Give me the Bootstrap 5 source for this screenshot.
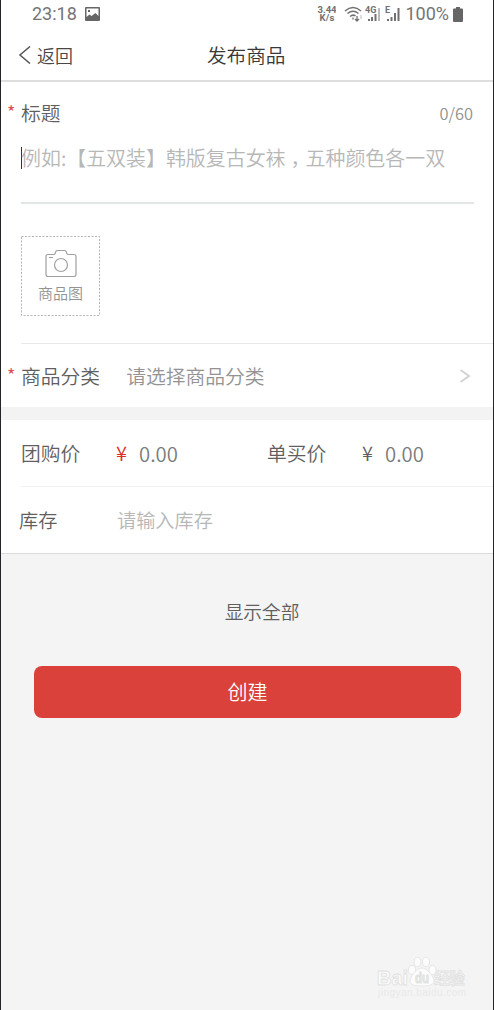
<!DOCTYPE html>
<html lang="zh-CN">
<head>
<meta charset="utf-8">
<meta name="viewport" content="width=device-width, initial-scale=1">
<title>发布商品</title>
<link href="https://cdn.jsdelivr.net/npm/bootstrap@5.3.0/dist/css/bootstrap.min.css" rel="stylesheet">
<style>
body{font-family:"Noto Sans CJK SC",sans-serif;font-size:19.8px;font-weight:350;line-height:30px;color:#5f5f5f;background:#f4f4f4;overflow:hidden}
.phone{height:1010px;border:solid #242428;border-width:0 1px}
.status{height:28px;font-family:Roboto,sans-serif;font-size:18px;font-weight:400;color:#757575;padding:0 30px 0 31px}
.speed{font-size:10px;line-height:8px;font-weight:700;width:20px}
.speed svg{display:block}
.topbar{height:54px;border-bottom:2px solid #dedede;color:#444;padding-top:1px}
.topbar a{font-size:18px;color:#484848;width:206px;padding-left:17px}
.topbar h1{font-size:19.6px;font-weight:350;color:#383838}
.inset{margin-left:20px}
.star{width:20px;padding-left:6px;color:#d9534f;font-size:18px;font-weight:400;line-height:27px}
.star-box{height:30px}
.count{font-size:16.4px;line-height:30px;color:#939393}
.title-field{height:76px;margin:0 19px 0 20px;border-bottom:2px solid #e2e6e5}
.hint{color:#b7b7b7;font-size:19.95px;line-height:28px;white-space:nowrap}
.comma{display:inline-block;padding:0 5px;font-feature-settings:"halt"}
.caret{width:1px;height:22px;background:#333;margin-right:-1px}
.photo{width:79px;height:80px;margin:32px 0 27px 20px;color:#939393;font-size:15px;line-height:22px}
.photo-icon{margin-top:13px}
.line{height:1px;background:#e8e8e8}
.line.faint{background:#f1f1f1}
.category{height:63px}
.category .pick{color:#939393;margin-left:26px}
.category .go{margin-right:23px}
.gap-band{height:13px;background:#f3f3f3}
.price{height:66px}
.price .label{width:95px}
.price .amount{color:#7b7b7b;margin-left:9px;font-size:20.3px}
.single{padding-left:10px}
.yen{width:14px;font-size:20px}
.red{color:#d9302c}
.stock{height:67px;border-bottom:1px solid #dcdcdc;font-size:19.2px}
.stock .label{width:98px;margin-left:18px}
.stock .hint{font-size:19.2px}
.more{margin-top:42px;padding-left:30px;font-size:18.7px}
.create{height:52px;margin:40px 32px 0 33px;background:#da413a;color:#fff;border:0;border-radius:8px;font-size:20px;font-weight:350;line-height:30px}
.watermark{margin:0 25px 10px auto;width:92px}
</style>
</head>
<body>
<div class="phone d-flex flex-column">
  <header class="bg-white flex-shrink-0">
  <div class="status d-flex align-items-center">
    <span>23:18</span>
    <svg class="ms-2" width="15" height="14" viewBox="0 0 15 14"><path fill="#666" fill-rule="evenodd" d="M1 0h13a1 1 0 0 1 1 1v12a1 1 0 0 1-1 1H1a1 1 0 0 1-1-1V1a1 1 0 0 1 1-1zm.5 1.500v8.500l3-2.500 2 1.500L10.500 6 13.500 9V1.500zM3 3h2v2H3z"/></svg>
    <div class="speed ms-auto"><svg width="20" height="18" viewBox="0 0 20 18" fill="#707070" text-anchor="middle"><text x="11" y="8" font-size="9.500" textLength="19">3.44</text><text x="11" y="16" font-size="9.500" textLength="15">K/s</text></svg></div>
    <svg class="ms-2" width="57" height="18" viewBox="0 0 57 18" fill="none" stroke="#707070" stroke-width="1.500">
      <path d="M1 6Q9-1 17 6M3.500 8.500Q9 4 14.500 8.500M6 11.500q3-2.500 5.500-.5"/><path d="M9 12.500v2M13 11v5m-2-2 2 2 2-2" stroke-width="1.300"/><path d="M17 14v-4" stroke="#bbb" stroke-width="1"/>
      <text x="21" y="8" font-size="9" font-weight="700" fill="#707070" stroke="none">4G</text>
      <path d="M25 14v2M28 12v4M31.500 9v7" stroke-width="2"/><path d="M35 3v13" stroke="#bbb" stroke-width="2"/>
      <text x="41" y="8" font-size="9" font-weight="700" fill="#707070" stroke="none">E</text>
      <path d="M44 14v2M47.500 12v4M51 8v8M54.500 3v13" stroke-width="2"/>
    </svg>
    <span class="ms-1">100%</span>
    <svg class="ms-1" width="10" height="15" viewBox="0 0 10 15"><path fill="#666" d="M3 0h4v1.500h2q1 0 1 1V14q0 1-1 1H1q-1 0-1-1V2.500q0-1 1-1h2z"/></svg>
  </div>
  <nav class="topbar d-flex align-items-center">
    <a href="#" class="text-decoration-none d-flex align-items-center"><svg width="19" height="18" viewBox="0 0 19 18" fill="none" stroke="#555" stroke-width="1.500"><path d="M12 .5 2 9l10 8.500"/></svg>返回</a>
    <h1 class="m-0">发布商品</h1>
  </nav>
  </header>
  <main class="bg-white">
    <div class="d-flex pt-3 pe-3">
      <span class="star flex-shrink-0">*</span><label>标题</label><span class="count ms-auto">0/60</span><span class="pe-1"></span>
    </div>
    <div class="title-field">
      <div class="d-flex align-items-center pt-3"><span class="caret"></span><span class="hint">例如:【五双装】韩版复古女袜<span class="comma">，</span>五种颜色各一双</span></div>
    </div>
    <div class="photo position-relative d-flex flex-column align-items-center">
      <svg class="position-absolute top-0 start-0" width="79" height="80" fill="none" stroke="#b5b5b5"><rect x=".5" y=".5" width="78" height="79" stroke-dasharray="2 1.500"/></svg>
      <svg class="photo-icon" width="32" height="29" viewBox="0 0 32 29" fill="none" stroke="#a0a0a0" stroke-width="1.200"><path d="M3 5.500h6q1 0 1.500-2T12 1.500h8q1 0 1.500 2t1.500 2h6q2 0 2 2V25q0 2.500-2 2.500H3q-2 0-2-2.500V7.500q0-2 2-2zM4 8.500h4"/><circle cx="16" cy="16" r="6.500"/></svg>
      <span class="mt-1">商品图</span>
    </div>
    <div class="line inset"></div>
    <div class="category d-flex align-items-center">
      <div class="star star-box flex-shrink-0">*</div><label>商品分类</label><span class="pick">请选择商品分类</span>
      <svg class="ms-auto go" width="10" height="14" viewBox="0 0 10 14" fill="none" stroke="#d2d2d2" stroke-width="2"><path d="m.5 1 8.500 6-8.500 6"/></svg>
    </div>
    <div class="gap-band"></div>
    <div class="row g-0 price align-items-center inset">
      <div class="col-6 d-flex"><span class="label">团购价</span><span class="yen red">¥</span><span class="amount">0.00</span></div>
      <div class="col-6 d-flex single"><span class="label">单买价</span><span class="yen">¥</span><span class="amount">0.00</span></div>
    </div>
    <div class="line faint inset"></div>
    <div class="stock d-flex align-items-center"><span class="label">库存</span><span class="hint">请输入库存</span></div>
  </main>
  <div class="more text-center">显示全部</div>
  <button class="create btn d-block flex-shrink-0">创建</button>
  <svg class="watermark mt-auto flex-shrink-0" height="45" viewBox="0 0 92 45">
    <g fill="#fcfcfc" stroke="#e1e1e1" stroke-width=".8">
      <ellipse cx="36" cy="15" rx="3.500" ry="4.500"/><ellipse cx="41.500" cy="7" rx="3.500" ry="4.500"/><ellipse cx="50" cy="7" rx="3.500" ry="4.500"/><ellipse cx="56.500" cy="15" rx="3.500" ry="4.500"/>
      <path d="M46 13c5 0 12 8 12 13 0 4-5 5-12 5s-12-1-12-5c0-5 7-13 12-13z"/>
      <g font-family="Liberation Sans,sans-serif" font-weight="700"><text x="1" y="30" font-size="20" textLength="31" lengthAdjust="spacingAndGlyphs">Bai</text><text x="39" y="28" font-size="14" fill="#e4e4e4" textLength="14" lengthAdjust="spacingAndGlyphs">du</text></g>
      <text x="58" y="29" font-size="16" font-weight="500" textLength="31">经验</text>
    </g>
    <text x="2" y="41" font-size="10" font-family="Liberation Sans,sans-serif" fill="#e9e9e9" textLength="88">jingyan.baidu.com</text>
  </svg>
</div>
<script src="https://cdn.jsdelivr.net/npm/bootstrap@5.3.0/dist/js/bootstrap.bundle.min.js"></script>
</body>
</html>
